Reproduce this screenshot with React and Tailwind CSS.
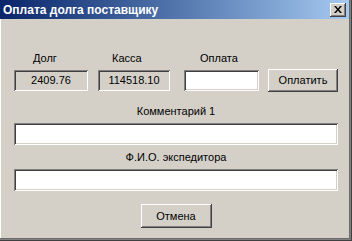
import React from 'react';

const FONT = { fontFamily: '"Liberation Sans", Arial, sans-serif' };

const sunken = 'shadow-[inset_1px_1px_0_#808080,inset_-1px_-1px_0_#ffffff,inset_2px_2px_0_#404040,inset_-2px_-2px_0_#d4d0c8]';
const raised = 'shadow-[inset_-1px_-1px_0_#404040,inset_1px_1px_0_#ffffff,inset_-2px_-2px_0_#808080,inset_2px_2px_0_#d4d0c8]';

function Button({ children, className = '' }) {
  return (
    <button type="button" className={`bg-[#d4d0c8] text-black text-[11px] ${raised} ${className}`}>
      {children}
    </button>
  );
}

export default function App() {
  return (
    <div
      style={FONT}
      className="w-[352px] h-[241px] bg-[#d4d0c8] flex flex-col overflow-hidden shadow-[inset_-1px_-1px_0_#404040,inset_-2px_-2px_0_#808080,inset_-3px_-3px_0_#6b6b6b,inset_1px_0_0_#ffffff]"
    >
      {/* Title bar */}
      <div className="h-[19px] mr-[3px] flex items-center justify-between pl-[3px] pr-[3px] bg-gradient-to-r from-[#0a246a] to-[#a6caf0]">
        <span className="text-white font-bold text-[12px] leading-none">Оплата долга поставщику</span>
        <div className={`w-[16px] h-[14px] bg-[#d4d0c8] flex items-center justify-center ${raised}`}>
          <svg width="8" height="7" viewBox="0 0 8 7">
            <path d="M0 0h2l2 2.5L6 0h2L5 3.5 8 7H6L4 4.5 2 7H0l3-3.5z" fill="#000" />
          </svg>
        </div>
      </div>

      {/* Body */}
      <div className="flex flex-col pl-[14px] pr-[14px] pt-[33px] text-[11px] leading-[13px] text-black">
        <div className="flex h-[13px]">
          <span className="w-[84px] pl-[19px]">Долг</span>
          <span className="w-[86px] pl-[14px]">Касса</span>
          <span className="pl-[16px]">Оплата</span>
        </div>

        <div className="flex items-center h-[23px] mt-[4px]">
          <div className={`w-[74px] h-[21px] flex items-center justify-center ${sunken}`}>2409.76</div>
          <div className={`w-[72px] h-[21px] ml-[10px] flex items-center justify-center ${sunken}`}>114518.10</div>
          <div className={`w-[75px] h-[21px] ml-[14px] bg-white ${sunken}`} />
          <Button className="w-[70px] h-[23px] ml-[9px]">Оплатить</Button>
        </div>

        <div className="mt-[13px] text-center">Комментарий 1</div>
        <div className={`mt-[5px] h-[22px] bg-white ${sunken}`} />

        <div className="mt-[6px] text-center">Ф.И.О. экспедитора</div>
        <div className={`mt-[5px] h-[22px] bg-white ${sunken}`} />

        <div className="mt-[13px] flex justify-center">
          <Button className="w-[71px] h-[24px]">Отмена</Button>
        </div>
      </div>
    </div>
  );
}
